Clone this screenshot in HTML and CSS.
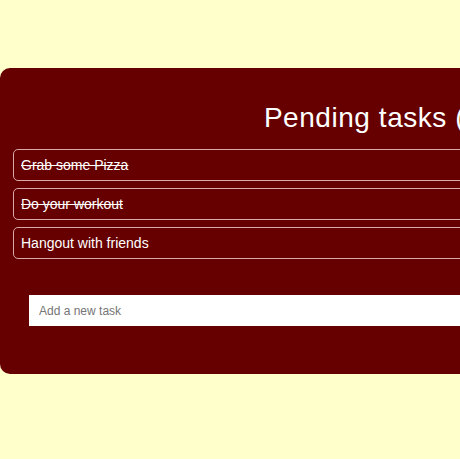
FILE: index.html
```html
<!DOCTYPE html>
<html>
<head>
<meta charset="utf-8">
<link rel="stylesheet" href="styles.css">
</head>
<body>
<div class="card">
  <h1 class="title">Pending tasks (3)</h1>
  <ul class="tasks">
    <li class="task done">Grab some Pizza</li>
    <li class="task done">Do your workout</li>
    <li class="task">Hangout with friends</li>
  </ul>
  <input class="new-task" type="text" placeholder="Add a new task">
</div>
</body>
</html>
```
FILE: styles.css
```css
html, body {
  margin: 0;
  padding: 0;
  overflow: hidden;
  background: #ffffcc;
  font-family: "Liberation Sans", Arial, sans-serif;
}
.card {
  margin-top: 68px;
  width: 755px;
  box-sizing: border-box;
  background: #660000;
  border-radius: 10px;
  padding: 34px 13px 48px 13px;
  display: flex;
  flex-direction: column;
}
.title {
  margin: 0 0 15px 0;
  font-size: 28px;
  letter-spacing: 0.55px;
  font-weight: normal;
  line-height: 32px;
  color: #ffffff;
  text-align: center;
}
.tasks {
  list-style: none;
  margin: 0;
  padding: 0;
  display: flex;
  flex-direction: column;
  gap: 7px;
}
.task {
  height: 32px;
  box-sizing: border-box;
  border: 1px solid #d9a9a9;
  border-radius: 5px;
  padding: 0 7px;
  display: flex;
  align-items: center;
  font-size: 14px;
  color: #ffffff;
}
.task.done {
  text-decoration: line-through;
}
.new-task {
  margin: 36px 16px 0 16px;
  height: 31px;
  box-sizing: border-box;
  border: none;
  padding: 0 10px;
  font-family: "Liberation Sans", Arial, sans-serif;
  font-size: 12px;
  background: #ffffff;
  outline: none;
}
.new-task::placeholder {
  color: #757575;
}
```
